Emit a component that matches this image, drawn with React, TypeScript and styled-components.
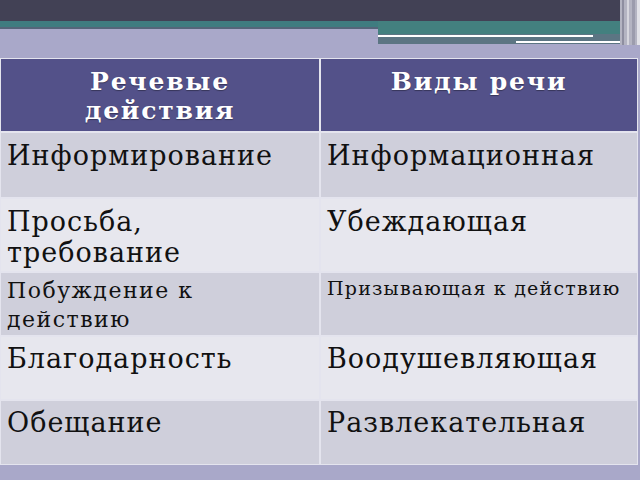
import React from "react";
import styled, { createGlobalStyle, css } from "styled-components";

const GlobalStyle = createGlobalStyle`
  html, body {
    margin: 0;
    padding: 0;
    background: #a9a8c9;
  }
  #root {
    width: 640px;
    height: 480px;
    overflow: hidden;
  }
`;

/* Page Layout */
const Slide = styled.div`
  width: 640px;
  height: 480px;
  display: flex;
  flex-direction: column;
  background: #a9a8c9;
  font-family: "DejaVu Serif", "Liberation Serif", serif;
`;

const Banner = styled.svg`
  display: block;
  flex: none;
`;

/* Table */
const Table = styled.div`
  width: 638px;
  display: grid;
  grid-template-columns: 318px 316px;
  gap: 2px;
  padding: 1px;
  box-sizing: border-box;
  background: #e4e4ee;
`;

type RowKind = "header" | "odd" | "even";

const rowColours: Record<RowKind, string> = {
  header: "#535189",
  odd: "#cfcfdb",
  even: "#e7e7ee",
};

/* text sizes: font-size, line-height, letter-spacing */
type TextSize = "big" | "mid" | "small";
const sizes: Record<TextSize, [number, number, number]> = {
  big: [27, 31, 1],
  mid: [22, 29, 1.5],
  small: [19, 24, 1.2],
};

type CellProps = { $kind: RowKind; $h: number; $size?: TextSize; $pt?: number };

const Cell = styled.div<CellProps>`
  height: ${({ $h }) => $h}px;
  box-sizing: border-box;
  overflow: hidden;
  white-space: nowrap;
  background: ${({ $kind }) => rowColours[$kind]};
  padding: ${({ $pt }) => $pt ?? 7}px 0 0 6px;
  font-size: ${({ $size }) => sizes[$size ?? "big"][0]}px;
  line-height: ${({ $size }) => sizes[$size ?? "big"][1]}px;
  letter-spacing: ${({ $size }) => sizes[$size ?? "big"][2]}px;
  color: #111;
  ${({ $kind }) =>
    $kind === "header" &&
    css`
      color: #ffffff;
      font-weight: bold;
      text-align: center;
      padding-left: 0;
      font-size: 25px;
      line-height: 29px;
      letter-spacing: 1.8px;
      text-shadow: 0 1px 1px rgba(0, 0, 0, 0.35);
    `}
`;

type Row = {
  h: number;
  kind: RowKind;
  left: React.ReactNode;
  right: React.ReactNode;
  leftSize?: TextSize;
  rightSize?: TextSize;
  pt?: number;
};

const rows: Row[] = [
  { h: 72, kind: "header", left: <>Речевые<br />действия</>, right: "Виды речи", pt: 8 },
  { h: 64, kind: "odd", left: "Информирование", right: "Информационная" },
  { h: 72, kind: "even", left: <>Просьба,<br />требование</>, right: "Убеждающая" },
  { h: 62, kind: "odd", left: <>Побуждение к<br />действию</>, right: "Призывающая к действию", leftSize: "mid", rightSize: "small", pt: 3 },
  { h: 62, kind: "even", left: "Благодарность", right: "Воодушевляющая", pt: 6 },
  { h: 63, kind: "odd", left: "Обещание", right: "Развлекательная", pt: 6 },
];

function TopBanner() {
  return (
    <Banner width="640" height="58" viewBox="0 0 640 58">
      <rect x="0" y="0" width="640" height="21" fill="#424155" />
      <rect x="0" y="21" width="378" height="6" fill="#3f7c80" />
      <rect x="0" y="27" width="378" height="2" fill="#55657a" />
      <rect x="378" y="21" width="262" height="13" fill="#43807f" />
      <rect x="378" y="34" width="242" height="10" fill="#5c7583" />
      <rect x="378" y="35" width="215" height="2" fill="#ffffff" />
      <rect x="516" y="41" width="112" height="2" fill="#ffffff" />
      <rect x="620" y="0" width="20" height="45" fill="#b4b4c2" />
      <rect x="622" y="0" width="2" height="45" fill="#8e8ea0" />
      <rect x="627" y="0" width="2" height="45" fill="#d6d6de" />
      <rect x="632" y="0" width="3" height="45" fill="#9c9cad" />
      <rect x="637" y="0" width="3" height="45" fill="#e2e2e8" />
    </Banner>
  );
}

export default function App() {
  return (
    <>
      <GlobalStyle />
      <Slide>
        <TopBanner />
        <Table>
          {rows.map((r, i) => (
            <React.Fragment key={i}>
              <Cell $kind={r.kind} $h={r.h} $size={r.leftSize} $pt={r.pt}>
                {r.left}
              </Cell>
              <Cell $kind={r.kind} $h={r.h} $size={r.rightSize} $pt={r.pt}>
                {r.right}
              </Cell>
            </React.Fragment>
          ))}
        </Table>
      </Slide>
    </>
  );
}
